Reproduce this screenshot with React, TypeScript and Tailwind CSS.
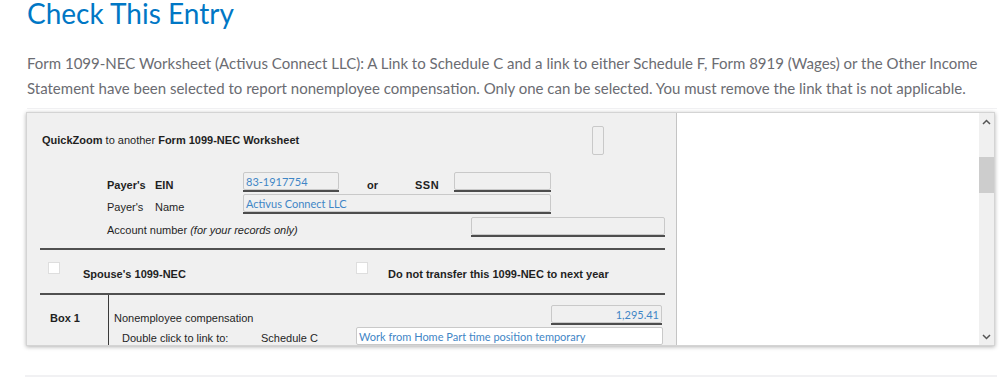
import React from "react";

const label = "font-['Liberation_Sans',Arial,sans-serif] text-[11px] leading-[13px] text-[#1f1f1f]";

function Field({ width, value, align = "left", white = false, underline = true }: { width: string; value?: string; align?: "left" | "right"; white?: boolean; underline?: boolean }) {
  return (
    <div className={`${width} shrink-0 ${underline ? "border-b-2 border-[#4d4d4d]" : ""}`}>
      <div
        className={`h-[18px] border border-[#c9c9c9] rounded-[2px] px-[2px] flex items-center ${white ? "bg-white" : "bg-[#f0f0f0]"} ${align === "right" ? "justify-end" : ""} font-['Lato',sans-serif] text-[11px] text-[#3f86c6] leading-none whitespace-nowrap`}
      >
        {value}
      </div>
    </div>
  );
}

function Checkbox() {
  return <div className="w-[12px] h-[12px] bg-white border border-[#dedede] shrink-0" />;
}

function Worksheet() {
  return (
    <div className="w-[650px] shrink-0 bg-[#f0f0f0] border-r border-[#c4c4c4] flex flex-col">
      <div className="h-[55px] flex items-center pl-[15px]">
        <p className={`${label} w-[550px]`}>
          <span className="font-bold">QuickZoom</span> to another <span className="font-bold">Form 1099-NEC Worksheet</span>
        </p>
        <div className="w-[12px] h-[29px] border border-[#c9c9c9] rounded-[2px] bg-[#f0f0f0]" />
      </div>

      <div className="h-[24px] flex items-end pl-[80px]">
        <p className={`${label} font-bold w-[48px]`}>Payer's</p>
        <p className={`${label} font-bold w-[88px]`}>EIN</p>
        <Field width="w-[96px]" value="83-1917754" />
        <p className={`${label} font-bold w-[28px] pl-[28px] box-content`}>or</p>
        <p className={`${label} font-bold w-[39px] tracking-[0.5px] pl-[20px] box-content`}>SSN</p>
        <Field width="w-[97px]" />
      </div>

      <div className="h-[22px] flex items-end pl-[80px]">
        <p className={`${label} w-[48px]`}>Payer's</p>
        <p className={`${label} w-[88px]`}>Name</p>
        <Field width="w-[308px]" value="Activus Connect LLC" />
      </div>

      <div className="h-[23px] flex items-end pl-[80px]">
        <p className={`${label} w-[364px]`}>
          Account number <span className="italic">(for your records only)</span>
        </p>
        <Field width="w-[194px]" />
      </div>

      <div className="mt-[11px] ml-[13px] w-[625px] h-[2px] bg-[#505050]" />

      <div className="h-[43px] flex pl-[21px]">
        <div className="pt-[12px]"><Checkbox /></div>
        <p className={`${label} font-bold pt-[18px] pl-[23px] w-[296px]`}>Spouse's 1099-NEC</p>
        <div className="pt-[12px]"><Checkbox /></div>
        <p className={`${label} font-bold pt-[18px] pl-[20px]`}>Do not transfer this 1099-NEC to next year</p>
      </div>

      <div className="ml-[13px] w-[625px] h-[2px] bg-[#505050]" />

      <div className="flex flex-1 overflow-hidden">
        <div className="w-[82px] shrink-0 border-r border-[#3a3a3a] pl-[23px] pt-[17px]">
          <p className={`${label} font-bold`}>Box 1</p>
        </div>
        <div className="flex-1 flex flex-col">
          <div className="h-[33px] flex items-end">
            <p className={`${label} w-[442px] pl-[5px]`}>Nonemployee compensation</p>
            <Field width="w-[111px]" value="1,295.41" align="right" />
          </div>
          <div className="flex items-end pt-[2px]">
            <p className={`${label} w-[152px] pl-[13px]`}>Double click to link to:</p>
            <p className={`${label} w-[95px]`}>Schedule C</p>
            <Field width="w-[307px]" value="Work from Home Part time position temporary" white underline={false} />
          </div>
        </div>
      </div>
    </div>
  );
}

function Scrollbar() {
  return (
    <div className="w-[15px] shrink-0 bg-[#f0f0f0] flex flex-col">
      <div className="h-[17px] flex items-center justify-center text-[#555]">
        <svg width="9" height="6" viewBox="0 0 9 6"><path d="M1 5 L4.5 1.5 L8 5" fill="none" stroke="currentColor" strokeWidth="1.5" /></svg>
      </div>
      <div className="h-[27px]" />
      <div className="h-[36px] bg-[#cdcdcd]" />
      <div className="flex-1" />
      <div className="h-[17px] flex items-center justify-center text-[#555]">
        <svg width="9" height="6" viewBox="0 0 9 6"><path d="M1 1 L4.5 4.5 L8 1" fill="none" stroke="currentColor" strokeWidth="1.5" /></svg>
      </div>
    </div>
  );
}

export default function App() {
  return (
    <div className="w-[999px] h-[378px] overflow-hidden bg-white">
      <h1 className="pl-[27px] font-['Lato',sans-serif] text-[28px] leading-[26px] text-[#0077c5]">Check This Entry</h1>

      <p className="pl-[27px] mt-[25px] font-['Lato',sans-serif] text-[15px] leading-[25px] text-[#6b6c72] whitespace-nowrap">
        Form 1099-NEC Worksheet (Activus Connect LLC): A Link to Schedule C and a link to either Schedule F, Form 8919 (Wages) or the Other Income
        <br />
        Statement have been selected to report nonemployee compensation. Only one can be selected. You must remove the link that is not applicable.
      </p>

      <div className="ml-[27px] mt-[7px] w-[970px] h-px bg-[#f1f1f3]" />

      <div className="ml-[26px] mt-[3px] w-[969px] h-[234px] flex border border-[#d4d4d4] shadow-[0_1px_4px_rgba(0,0,0,0.3)] overflow-hidden">
        <Worksheet />
        <div className="flex-1 bg-white" />
        <Scrollbar />
      </div>

      <div className="ml-[25px] mt-[29px] w-[972px] h-[2px] bg-[#f1f1f3]" />
    </div>
  );
}
